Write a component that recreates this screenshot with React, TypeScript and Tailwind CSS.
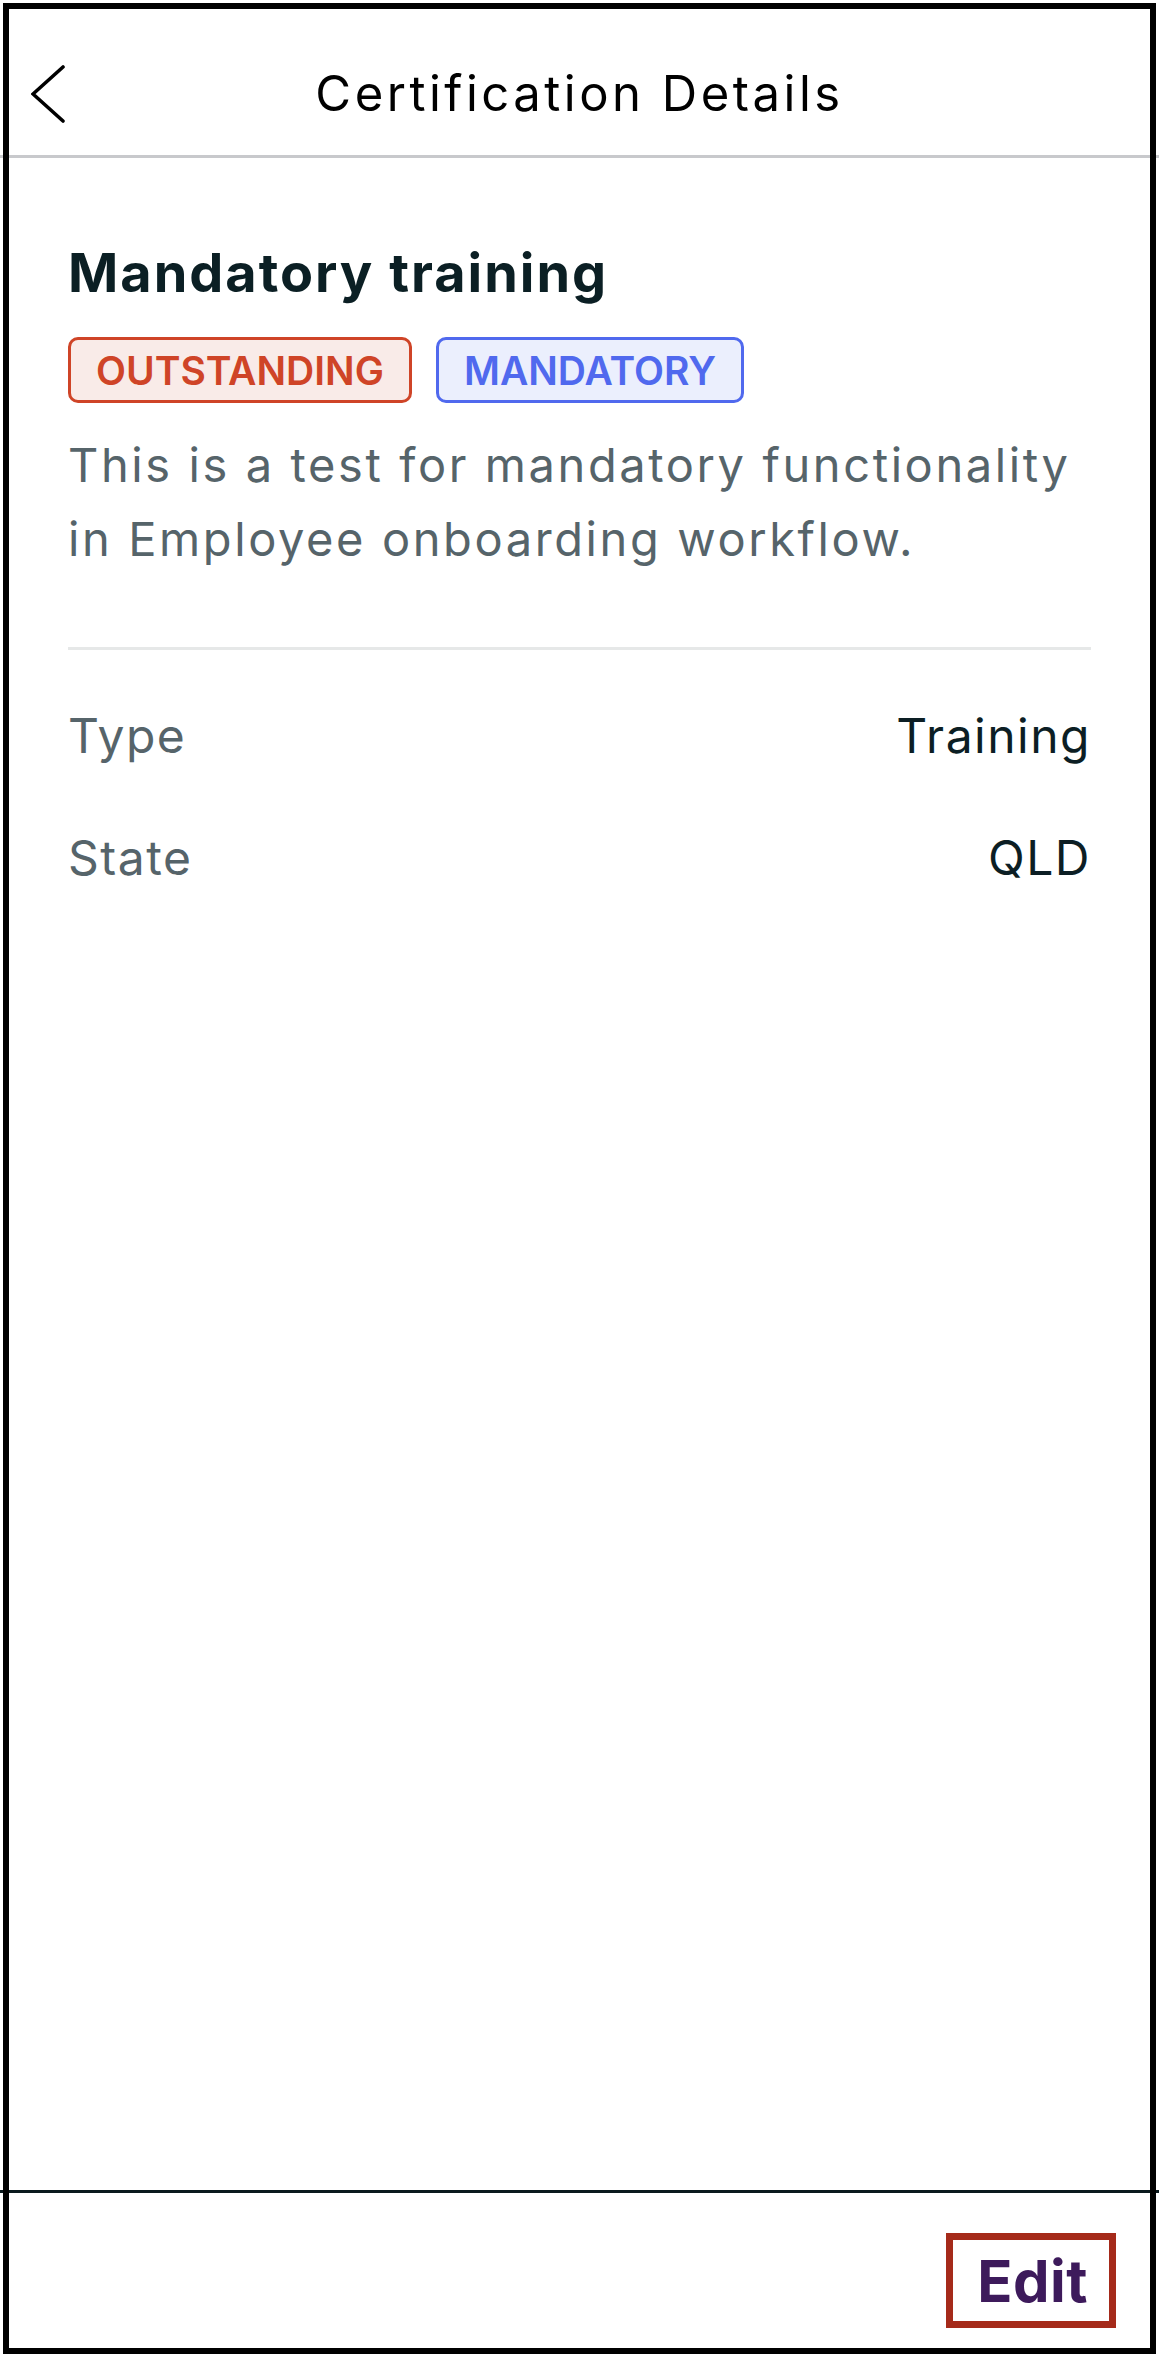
import { ReactNode } from "react"

function Badge({ tone, children }: { tone: "red" | "blue"; children: ReactNode }) {
  const styles =
    tone === "red"
      ? "border-[#cf4427] bg-[#f9ebe8] text-[#cf4427]"
      : "border-[#5069ee] bg-[#ebeffd] text-[#5069ee]"
  return (
    <span
      className={
        "flex h-[66px] items-center rounded-[10px] border-[3px] px-[25px] text-[39px] font-semibold leading-none " +
        styles
      }
    >
      {children}
    </span>
  )
}

function DetailRow({ label, value }: { label: string; value: string }) {
  return (
    <div className="flex h-[122px] items-center justify-between text-[48px] leading-[58px] tracking-[1.5px]">
      <span className="text-[#56646a]">{label}</span>
      <span className="text-[#0c1e24]">{value}</span>
    </div>
  )
}

export default function App() {
  return (
    <div className="relative flex h-[2358px] w-[1159px] flex-col bg-white font-['Inter',sans-serif]">
      {/* header */}
      <div className="grid h-[155px] grid-cols-[1fr_auto_1fr] items-center pt-[32px]">
        <button className="flex items-center pl-[31px]">
          <svg width="36" height="60" viewBox="0 0 36 60" fill="none">
            <polyline
              points="32,3 2,30 32,57"
              stroke="#000"
              strokeWidth="3.6"
              strokeLinecap="round"
              strokeLinejoin="miter"
            />
          </svg>
        </button>
        <h1 className="text-[49px] leading-[60px] tracking-[3.5px] text-black">Certification Details</h1>
        <div />
      </div>
      <div className="h-[3px] bg-[#c8c9cc]" />

      {/* content */}
      <div className="px-[68px]">
        <h2 className="mt-[83px] text-[54px] font-bold leading-[64px] tracking-[2px] text-[#0b1f24]">
          Mandatory training
        </h2>
        <div className="mt-[32px] flex gap-[24px]">
          <Badge tone="red">OUTSTANDING</Badge>
          <Badge tone="blue">MANDATORY</Badge>
        </div>
        <p className="mt-[25px] text-[47px] leading-[74px] tracking-[2.6px] text-[#56646a]">
          This is a test for mandatory functionality in Employee onboarding workflow.
        </p>
        <div className="mt-[71px] h-[3px] bg-[#e6e8e8]" />
        <div className="mt-[25px]">
          <DetailRow label="Type" value="Training" />
          <DetailRow label="State" value="QLD" />
        </div>
      </div>

      <div className="flex-1" />

      {/* footer */}
      <div className="h-[3px] bg-[#0b1a1e]" />
      <div className="flex justify-end pb-[30px] pr-[43px] pt-[40px]">
        <button className="flex h-[95px] items-center border-[7px] border-[#a52a1a] pl-[24px] pr-[21px] text-[58px] font-bold leading-none tracking-[0.5px] text-[#3d1a5b]">
          Edit
        </button>
      </div>

      {/* device frame */}
      <div className="pointer-events-none absolute bottom-[4px] left-[3px] right-[3px] top-[3px] border-[6px] border-black" />
    </div>
  )
}
